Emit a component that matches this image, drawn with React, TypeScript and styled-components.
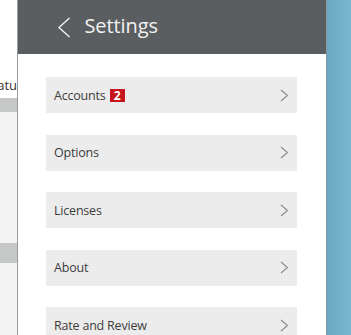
import { createGlobalStyle, styled } from "styled-components";

const GlobalStyle = createGlobalStyle`
  html, body {
    margin: 0;
    padding: 0;
    width: 351px;
    height: 335px;
    overflow: hidden;
    font-family: "Open Sans", "Noto Sans", sans-serif;
  }
`;

const Screen = styled.div`
  display: grid;
  grid-template-columns: 17px 310px 1fr;
  width: 351px;
  height: 335px;
  overflow: hidden;
`;

const Backdrop = styled.div`
  display: flex;
  flex-direction: column;
  background: #f4f4f4;
  overflow: hidden;
`;

const BackdropTop = styled.div`
  display: flex;
  justify-content: flex-end;
  align-items: flex-end;
  height: 98px;
  background: #ffffff;
  font-size: 13px;
  color: #333;
  white-space: nowrap;
  line-height: 16px;
  padding-bottom: 5px;
  box-sizing: border-box;
`;

const Band = styled.div<{ $h: number; $mt?: number }>`
  height: ${({ $h }) => $h}px;
  margin-top: ${({ $mt }) => $mt ?? 0}px;
  background: #c6c8c8;
  flex-shrink: 0;
`;

const Panel = styled.div`
  display: flex;
  flex-direction: column;
  background: #ffffff;
  border-left: 1px solid #9a9a9a;
  border-right: 1px solid #8a9aa0;
  box-sizing: border-box;
`;

const Header = styled.div`
  display: flex;
  align-items: center;
  gap: 14px;
  height: 54px;
  padding-left: 40px;
  background: #5b5e60;
  color: #f2f2f2;
  flex-shrink: 0;
  box-sizing: border-box;
`;

const Title = styled.div`
  font-family: "Open Sans", sans-serif;
  font-size: 20px;
  line-height: 24px;
  letter-spacing: -0.1px;
  padding-bottom: 2px;
`;

const List = styled.ul`
  list-style: none;
  margin: 0;
  padding: 23px 29px 0 28px;
  display: flex;
  flex-direction: column;
  gap: 21.5px;
`;

const Item = styled.li`
  display: flex;
  align-items: center;
  height: 36px;
  padding: 0 9px 0 8px;
  background: #ececec;
  color: #3c3c3c;
  font-size: 12.5px;
  flex-shrink: 0;
`;

const Label = styled.span`
  flex: 1;
  display: flex;
  align-items: center;
  gap: 4px;
  letter-spacing: -0.2px;
`;

const Badge = styled.span`
  display: inline-flex;
  align-items: center;
  justify-content: center;
  width: 15px;
  height: 13px;
  background: #c4161c;
  color: #fff;
  font-size: 12px;
  font-weight: 700;
  line-height: 13px;
`;

const Side = styled.div`
  background: linear-gradient(90deg, #6aa7c2 0%, #7ab7cf 100%);
`;

const Chevron = ({ dir, size, color, width }: { dir: "left" | "right"; size: number; color: string; width: number }) => (
  <svg width={size / 2 + 2} height={size} viewBox={`0 0 ${size / 2 + 2} ${size}`}>
    <polyline
      points={
        dir === "left"
          ? `${size / 2 + 1},1 1,${size / 2} ${size / 2 + 1},${size - 1}`
          : `1,1 ${size / 2 + 1},${size / 2} 1,${size - 1}`
      }
      fill="none"
      stroke={color}
      strokeWidth={width}
    />
  </svg>
);

const items = [
  { label: "Accounts", badge: 2 },
  { label: "Options" },
  { label: "Licenses" },
  { label: "About" },
  { label: "Rate and Review" },
];

export default function App() {
  return (
    <>
      <GlobalStyle />
      <Screen>
        <Backdrop>
          <BackdropTop>Statu</BackdropTop>
          <Band $h={14} />
          <Band $h={20} $mt={131} />
        </Backdrop>
        <Panel>
          <Header>
            <Chevron dir="left" size={21} color="#f2f2f2" width={1.4} />
            <Title>Settings</Title>
          </Header>
          <List>
            {items.map((it) => (
              <Item key={it.label}>
                <Label>
                  {it.label}
                  {it.badge && <Badge>{it.badge}</Badge>}
                </Label>
                <Chevron dir="right" size={13} color="#8a8a8a" width={1.1} />
              </Item>
            ))}
          </List>
        </Panel>
        <Side />
      </Screen>
    </>
  );
}
